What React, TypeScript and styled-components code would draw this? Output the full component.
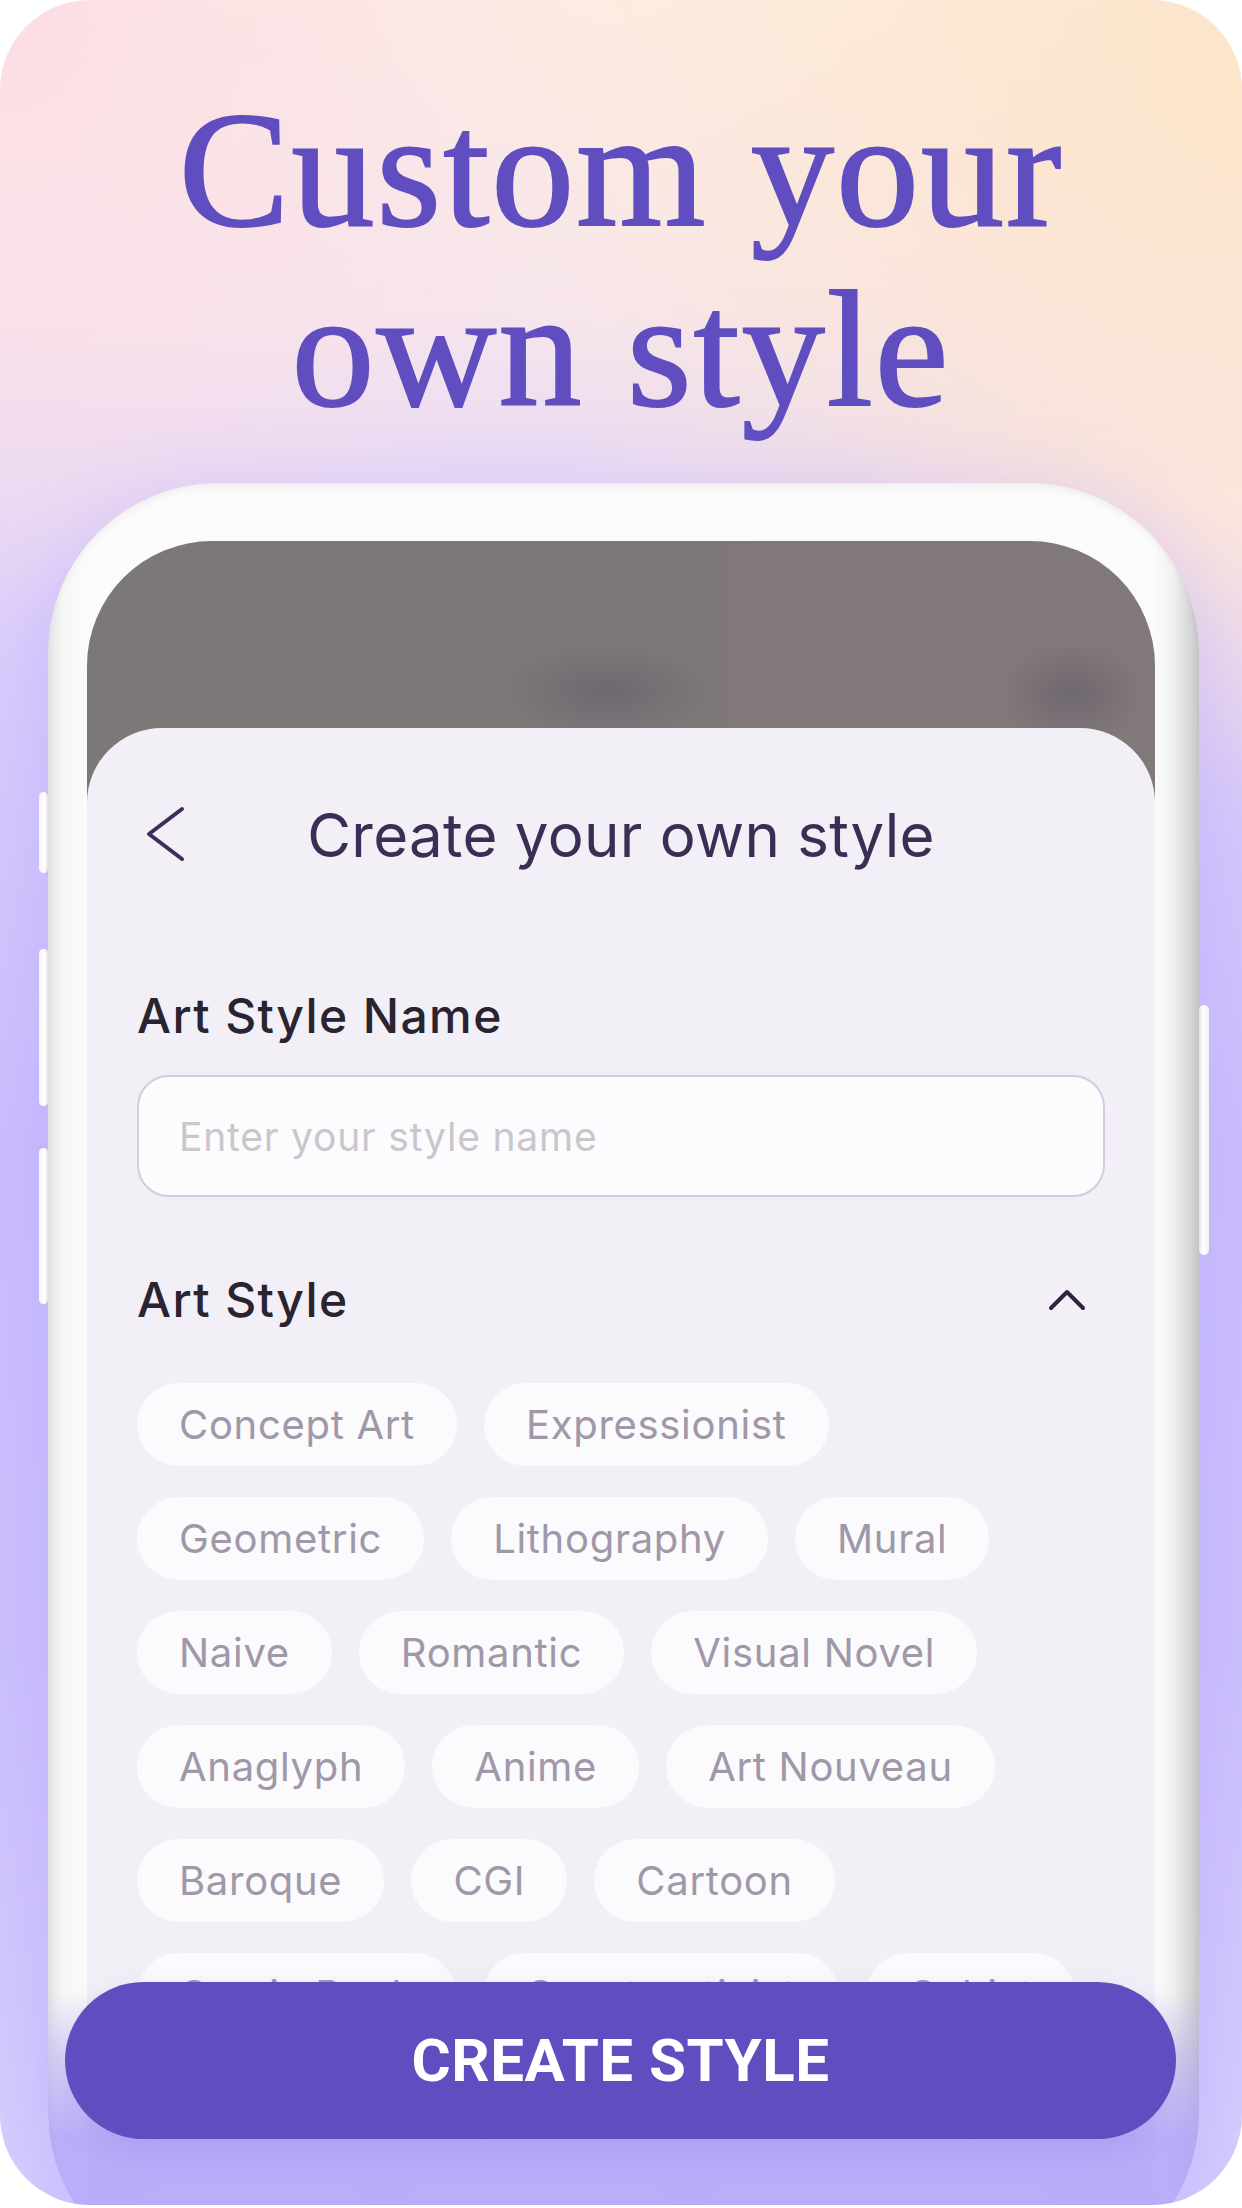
import styled, { createGlobalStyle } from 'styled-components';

const GlobalStyle = createGlobalStyle`
  html, body {
    margin: 0;
    padding: 0;
    background: #ffffff;
  }
  body {
    width: 1242px;
    height: 2208px;
    overflow: hidden;
  }
  * {
    box-sizing: border-box;
  }
`;

const Card = styled.div`
  position: relative;
  width: 1242px;
  height: 2205px;
  border-radius: 90px;
  overflow: hidden;
  display: flex;
  flex-direction: column;
  background:
    radial-gradient(circle at 100% 3%, rgba(253, 228, 200, 0.95) 0, rgba(253, 228, 200, 0) 32%),
    radial-gradient(circle at 0% 0%, rgba(252, 220, 228, 0.95) 0, rgba(252, 220, 228, 0) 26%),
    radial-gradient(ellipse 380px 300px at 100% 22%, rgba(252, 232, 234, 0.9) 0, rgba(252, 232, 234, 0) 100%),
    linear-gradient(180deg, #fcefe6 0%, #f6e6ee 14%, #ddd0fb 28%, #cbbefc 52%, #cdc1fc 75%, #d8d0fd 100%);
`;

const Headline = styled.h1`
  margin: 0;
  padding-top: 79px;
  font-family: 'Liberation Serif', 'Times New Roman', serif;
  font-weight: 400;
  font-size: 166px;
  line-height: 180px;
  letter-spacing: 2px;
  color: #604ec0;
  text-align: center;
  -webkit-text-stroke: 2px #604ec0;
`;

const Phone = styled.div`
  position: relative;
  flex-shrink: 0;
  margin: 44px 0 0 48px;
  width: 1151px;
  height: 1800px;
  padding: 58px 44px 0 39px;
  border-radius: 170px;
  background: linear-gradient(
    90deg,
    #e3e3e5 0px,
    #f6f6f6 14px,
    #fbfbfb 38px,
    #fbfbfb calc(100% - 44px),
    #f1f1f1 calc(100% - 26px),
    #c7c7c9 100%
  );
  box-shadow:
    inset 0 5px 8px -3px rgba(0, 0, 0, 0.07),
    0 30px 80px 10px rgba(180, 160, 255, 0.45);
`;

const SideKey = styled.div<{ $side: 'left' | 'right'; $top: number; $height: number }>`
  position: absolute;
  ${(p) => (p.$side === 'left' ? 'left: -9px;' : 'right: -10px;')}
  top: ${(p) => p.$top}px;
  width: ${(p) => (p.$side === 'left' ? 9 : 10)}px;
  height: ${(p) => p.$height}px;
  border-radius: 5px;
  background: ${(p) =>
    p.$side === 'left'
      ? 'linear-gradient(90deg, #f4f4f4, #ffffff 60%, #e4e4e4)'
      : 'linear-gradient(90deg, #e6e6e6, #ffffff 40%, #f2f2f2)'};
`;

const Screen = styled.div`
  height: 100%;
  border-radius: 125px 125px 0 0;
  overflow: hidden;
  display: flex;
  flex-direction: column;
  background:
    radial-gradient(ellipse 110px 50px at 520px 150px, rgba(104, 96, 108, 0.7) 0, rgba(104, 96, 108, 0) 100%),
    radial-gradient(ellipse 70px 50px at 985px 152px, rgba(104, 96, 108, 0.7) 0, rgba(104, 96, 108, 0) 100%),
    linear-gradient(90deg, #7d7878, #817879);
`;

const StatusArea = styled.div`
  height: 187px;
  flex-shrink: 0;
`;

const Sheet = styled.div`
  flex: 1;
  border-radius: 75px 75px 0 0;
  background: #f2eff7;
  padding: 77px 50px 0 50px;
  font-family: Inter, 'Noto Sans', sans-serif;
`;

const Header = styled.div`
  display: grid;
  grid-template-columns: 1fr auto 1fr;
  align-items: start;
`;

const BackIcon = styled.svg`
  margin-top: 1px;
  width: 48px;
  height: 56px;
`;

const SheetTitle = styled.h2`
  margin: 0;
  font-size: 60px;
  line-height: 60px;
  font-weight: 400;
  color: #3a2e55;
  letter-spacing: 0.3px;
`;

const Label = styled.div`
  margin-top: 127px;
  font-size: 48px;
  line-height: 48px;
  font-weight: 500;
  color: #29242f;
  letter-spacing: 1.4px;
`;

const NameInput = styled.input`
  display: block;
  margin-top: 35px;
  width: 100%;
  height: 122px;
  padding: 0 40px;
  border: 2px solid #d4cbdf;
  border-radius: 32px;
  background: #fcfbfd;
  font-family: Inter, 'Noto Sans', sans-serif;
  font-size: 39px;
  letter-spacing: 0.8px;
  outline: none;
  color: #3a2e55;
  &::placeholder {
    color: #c9c7cc;
  }
`;

const SectionRow = styled.div`
  margin-top: 79px;
  display: flex;
  align-items: center;
  justify-content: space-between;
`;

const SectionLabel = styled.div`
  font-size: 48px;
  line-height: 48px;
  font-weight: 500;
  color: #29242f;
  letter-spacing: 1.4px;
`;

const CollapseIcon = styled.svg`
  margin-right: 18px;
  width: 40px;
  height: 24px;
`;

const ChipList = styled.div`
  margin-top: 59px;
  display: flex;
  flex-wrap: wrap;
  gap: 31px 27px;
`;

const Chip = styled.div`
  height: 83px;
  padding: 0 42px;
  border-radius: 42px;
  background: #fbfafc;
  display: flex;
  align-items: center;
  font-size: 40px;
  color: #a097a9;
  letter-spacing: 0.7px;
  white-space: nowrap;
`;

const BottomFade = styled.div`
  position: absolute;
  left: 0;
  right: 0;
  bottom: 0;
  height: 293px;
  border-radius: 0 0 170px 170px;
  background: linear-gradient(
    180deg,
    rgba(178, 163, 249, 0) 0px,
    rgba(178, 163, 249, 0.35) 60px,
    rgba(178, 163, 249, 0.88) 150px,
    rgba(178, 163, 249, 0.9) 100%
  );
  pointer-events: none;
`;

const CreateButton = styled.button`
  position: absolute;
  left: 65px;
  top: 1982px;
  width: 1111px;
  height: 157px;
  border: none;
  border-radius: 79px;
  background: #604ec0;
  color: #ffffff;
  font-family: Roboto, 'Liberation Sans', sans-serif;
  font-weight: 700;
  font-size: 60px;
  letter-spacing: 0.5px;
  cursor: pointer;
  box-shadow: 0 10px 30px rgba(96, 78, 192, 0.15);
`;

const artStyles = [
  'Concept Art',
  'Expressionist',
  'Geometric',
  'Lithography',
  'Mural',
  'Naive',
  'Romantic',
  'Visual Novel',
  'Anaglyph',
  'Anime',
  'Art Nouveau',
  'Baroque',
  'CGI',
  'Cartoon',
  'Comic Book',
  'Constructivist',
  'Cubist',
  'Cyberpunk',
  'Doodle',
  'Digital Art',
  'Fantasy',
  'Flat Color',
  'Graphic Novel',
];

const App = () => {
  return (
    <>
      <GlobalStyle />
      <Card>
        <Headline>
          Custom your
          <br />
          own style
        </Headline>
        <Phone>
          <SideKey $side='left' $top={309} $height={81} />
          <SideKey $side='left' $top={466} $height={157} />
          <SideKey $side='left' $top={665} $height={156} />
          <SideKey $side='right' $top={522} $height={250} />
          <Screen>
            <StatusArea />
            <Sheet>
              <Header>
                <BackIcon viewBox='0 0 48 56' fill='none'>
                  <path
                    d='M45 3 L12 28 L45 53'
                    stroke='#3c2e58'
                    strokeWidth='4'
                    strokeLinecap='round'
                    strokeLinejoin='round'
                  />
                </BackIcon>
                <SheetTitle>Create your own style</SheetTitle>
                <span />
              </Header>
              <Label>Art Style Name</Label>
              <NameInput placeholder='Enter your style name' />
              <SectionRow>
                <SectionLabel>Art Style</SectionLabel>
                <CollapseIcon viewBox='0 0 40 24' fill='none'>
                  <path
                    d='M4 20 L20 4 L36 20'
                    stroke='#2e2440'
                    strokeWidth='4'
                    strokeLinecap='round'
                    strokeLinejoin='round'
                  />
                </CollapseIcon>
              </SectionRow>
              <ChipList>
                {artStyles.map((s) => (
                  <Chip key={s}>{s}</Chip>
                ))}
              </ChipList>
            </Sheet>
          </Screen>
          <BottomFade />
        </Phone>
        <CreateButton>CREATE STYLE</CreateButton>
      </Card>
    </>
  );
};

export default App;
